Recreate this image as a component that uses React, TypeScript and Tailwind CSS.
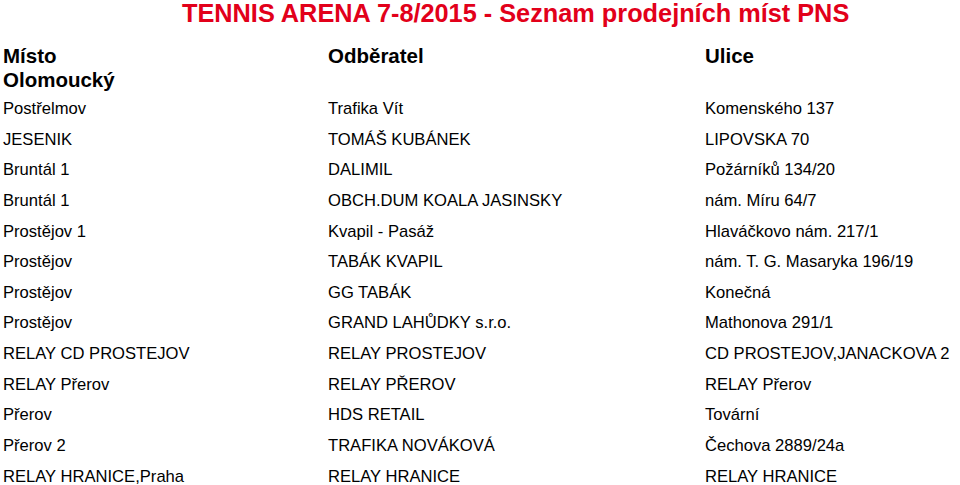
type Row = [string, string, string];

const ROWS: Row[] = [
  ["Postřelmov", "Trafika Vít", "Komenského 137"],
  ["JESENIK", "TOMÁŠ KUBÁNEK", "LIPOVSKA 70"],
  ["Bruntál 1", "DALIMIL", "Požárníků 134/20"],
  ["Bruntál 1", "OBCH.DUM KOALA JASINSKY", "nám. Míru 64/7"],
  ["Prostějov 1", "Kvapil - Pasáž", "Hlaváčkovo nám. 217/1"],
  ["Prostějov", "TABÁK KVAPIL", "nám. T. G. Masaryka 196/19"],
  ["Prostějov", "GG TABÁK", "Konečná"],
  ["Prostějov", "GRAND LAHŮDKY s.r.o.", "Mathonova 291/1"],
  ["RELAY CD PROSTEJOV", "RELAY PROSTEJOV", "CD PROSTEJOV,JANACKOVA 2"],
  ["RELAY Přerov", "RELAY PŘEROV", "RELAY Přerov"],
  ["Přerov", "HDS RETAIL", "Tovární"],
  ["Přerov 2", "TRAFIKA NOVÁKOVÁ", "Čechova 2889/24a"],
  ["RELAY HRANICE,Praha", "RELAY HRANICE", "RELAY HRANICE"],
];

export default function App() {
  return (
    <div className="h-[485px] w-[960px] overflow-hidden bg-white font-['Liberation_Sans',Arial,sans-serif] text-black">
      <h1 className="whitespace-nowrap pl-[182px] text-[25.3px] font-bold leading-[26px] text-[#e2001a]">
        TENNIS ARENA 7-8/2015 - Seznam prodejních míst PNS
      </h1>

      <div className="mt-[18px] grid grid-cols-[325px_377px_1fr] pl-[3px] text-[20.5px] font-bold leading-[24px]">
        <div>Místo</div>
        <div>Odběratel</div>
        <div>Ulice</div>
      </div>
      <div className="pl-[3px] text-[20.5px] font-bold leading-[24px]">Olomoucký</div>

      <div className="mt-[2px] pl-[3px] text-[16.6px]">
        {ROWS.map((r, i) => (
          <div key={i} className="grid h-[30.67px] grid-cols-[325px_377px_1fr] items-center whitespace-nowrap">
            <div>{r[0]}</div>
            <div>{r[1]}</div>
            <div>{r[2]}</div>
          </div>
        ))}
      </div>
    </div>
  );
}
